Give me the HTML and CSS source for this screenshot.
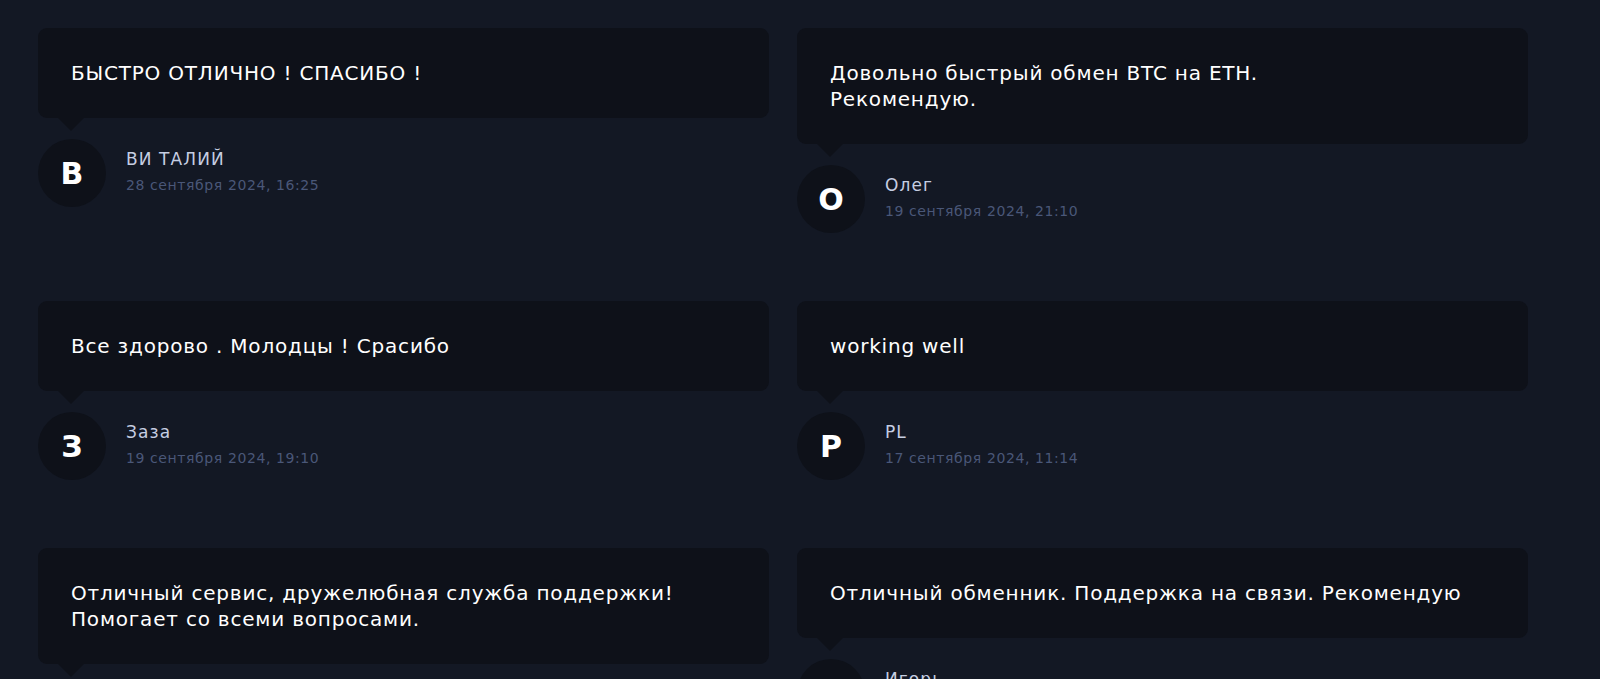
FILE: index.html
```html
<!DOCTYPE html>
<html lang="ru">
<head>
<meta charset="utf-8">
<link rel="stylesheet" href="styles.css">
</head>
<body>
<div class="reviews">
  <div class="review">
    <div class="bubble">БЫСТРО ОТЛИЧНО ! СПАСИБО !</div>
    <div class="author">
      <div class="avatar">В</div>
      <div class="meta"><div class="name">ВИ ТАЛИЙ</div><div class="date">28 сентября 2024, 16:25</div></div>
    </div>
  </div>
  <div class="review">
    <div class="bubble">Довольно быстрый обмен BTC на ETH.<br>Рекомендую.</div>
    <div class="author">
      <div class="avatar">О</div>
      <div class="meta"><div class="name">Олег</div><div class="date">19 сентября 2024, 21:10</div></div>
    </div>
  </div>
  <div class="review">
    <div class="bubble">Все здорово . Молодцы ! Срасибо</div>
    <div class="author">
      <div class="avatar">З</div>
      <div class="meta"><div class="name">Заза</div><div class="date">19 сентября 2024, 19:10</div></div>
    </div>
  </div>
  <div class="review">
    <div class="bubble">working well</div>
    <div class="author">
      <div class="avatar">P</div>
      <div class="meta"><div class="name">PL</div><div class="date">17 сентября 2024, 11:14</div></div>
    </div>
  </div>
  <div class="review">
    <div class="bubble">Отличный сервис, дружелюбная служба поддержки!<br>Помогает со всеми вопросами.</div>
    <div class="author">
      <div class="avatar">О</div>
      <div class="meta"><div class="name">Анна</div><div class="date">16 сентября 2024, 10:02</div></div>
    </div>
  </div>
  <div class="review">
    <div class="bubble">Отличный обменник. Поддержка на связи. Рекомендую</div>
    <div class="author">
      <div class="avatar">И</div>
      <div class="meta"><div class="name">Игорь</div><div class="date">15 сентября 2024, 14:40</div></div>
    </div>
  </div>
</div>
</body>
</html>
```
FILE: styles.css
```css
html, body {
  margin: 0;
  background: #131824;
}
body {
  font-family: "DejaVu Sans", "Noto Sans", sans-serif;
  color: #ffffff;
}
.reviews {
  display: grid;
  grid-template-columns: 731px 731px;
  column-gap: 28px;
  row-gap: 68px;
  align-items: start;
  padding: 28px 0 40px 38px;
}
.bubble {
  position: relative;
  background: #0e1119;
  border-radius: 9px;
  padding: 32px 33px 32px;
  font-size: 20px;
  line-height: 26px;
  letter-spacing: 0.8px;
}
.bubble::after {
  content: "";
  position: absolute;
  left: 20px;
  bottom: -13px;
  border-left: 13px solid transparent;
  border-right: 13px solid transparent;
  border-top: 13px solid #0e1119;
}
.author {
  display: flex;
  align-items: center;
  gap: 20px;
  margin-top: 21px;
}
.avatar {
  width: 68px;
  height: 68px;
  border-radius: 50%;
  background: #0e1119;
  display: flex;
  align-items: center;
  justify-content: center;
  font-family: "DejaVu Sans", sans-serif;
  font-size: 30px;
  font-weight: 700;
  color: #ffffff;
  flex-shrink: 0;
}
.meta {
  display: flex;
  flex-direction: column;
  gap: 5px;
  padding-bottom: 3px;
}
.name {
  font-size: 17px;
  line-height: 22px;
  letter-spacing: 1.1px;
  color: #c6cee2;
}
.date {
  font-size: 14px;
  line-height: 20px;
  letter-spacing: 0.6px;
  color: #4a5778;
}
```
